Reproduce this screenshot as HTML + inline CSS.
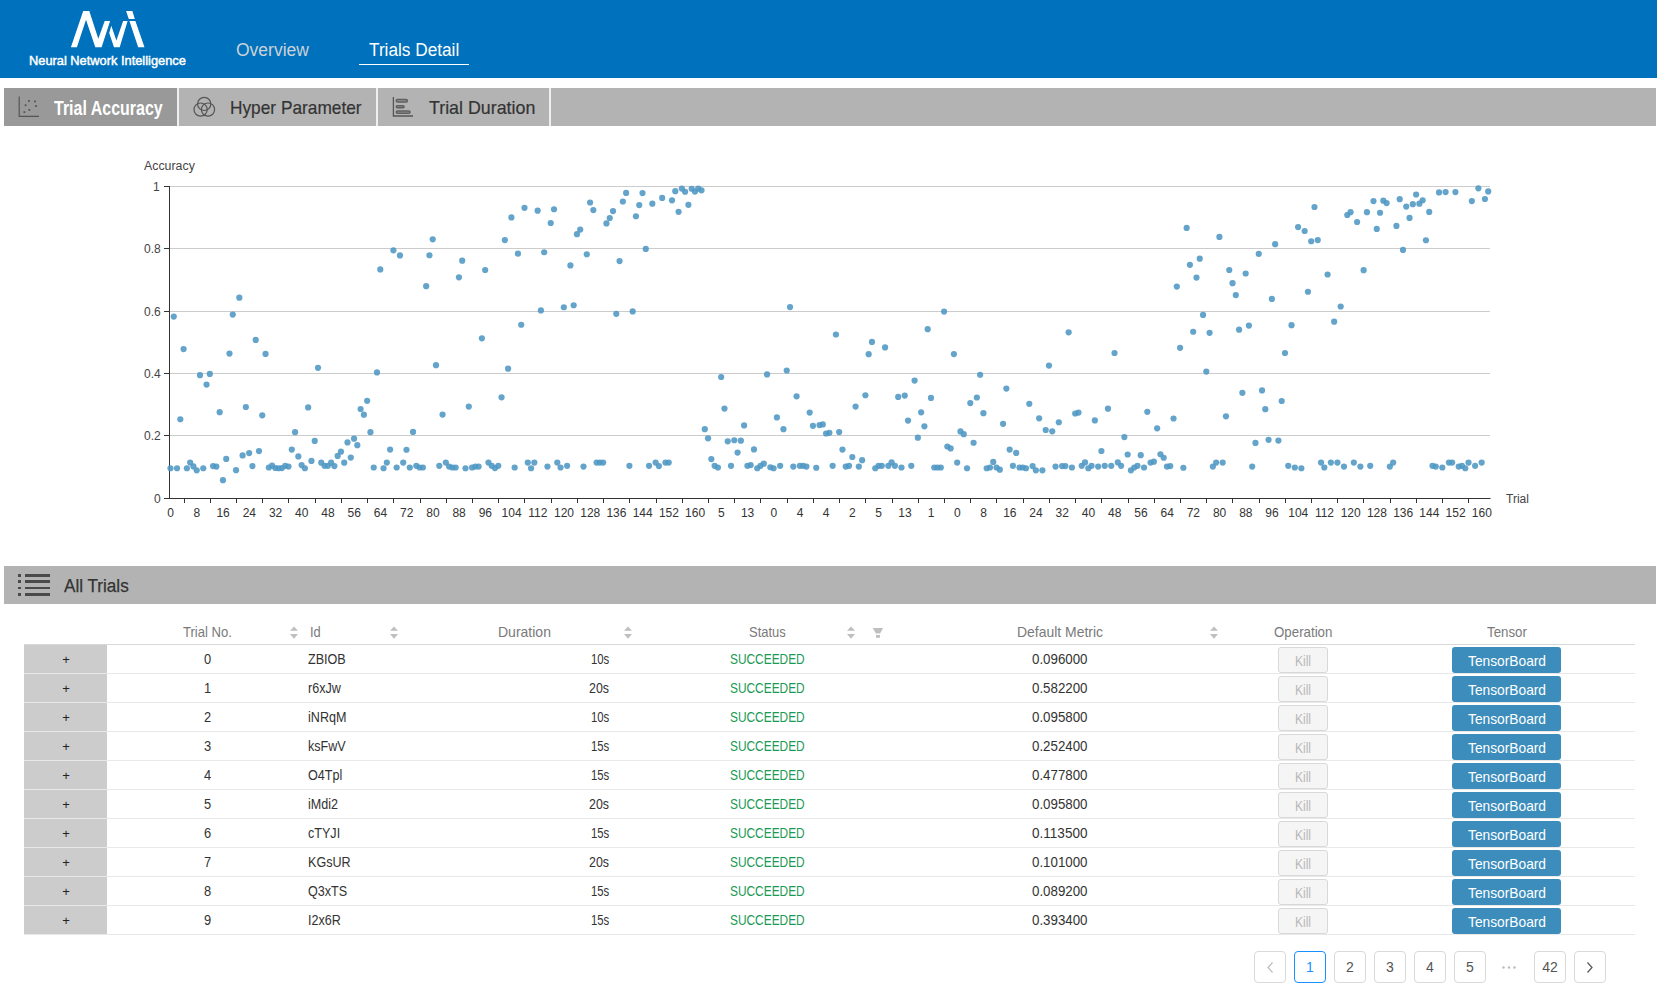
<!DOCTYPE html>
<html><head><meta charset="utf-8"><title>NNI</title>
<style>
html,body{margin:0;padding:0;background:#fff;width:1657px;height:984px;overflow:hidden;}
body{position:relative;font-family:"Liberation Sans",sans-serif;}
.t{position:absolute;white-space:nowrap;font-family:"Liberation Sans",sans-serif;}
.r{position:absolute;box-sizing:content-box;}
</style></head><body>
<div class="r" style="left:0px;top:0px;width:1657px;height:78px;background:#0071bc;"></div>
<svg class="r" style="left:0;top:0" width="200" height="78" viewBox="0 0 200 78">
<path fill="#fff" d="M70.9,47.2 L83.2,11 L89.3,11 L98.3,38.8 L104.7,21 L110.1,21 L101.6,47.2 L95.3,47.2 L86,19.8 L76.9,47.2 Z"/>
<path fill="#fff" d="M111.3,25.8 L109.2,33.1 L114,47.2 L119.7,47.2 L127.6,21 L123.1,21 L116.4,40.6 Z"/>
<path fill="#fff" d="M126.1,11 L132.4,11 L134.8,18.9 L128.8,18.9 Z"/>
<path fill="#fff" d="M129.4,21 L135.4,21 L144.5,47.2 L138.2,47.2 Z"/>
</svg>
<div class="t" style="left:29.00px;top:55.20px;font-size:12.7px;line-height:12.7px;color:#fff;transform:scaleX(1.0109);transform-origin:0 0;-webkit-text-stroke:0.45px #fff;">Neural Network Intelligence</div>
<div class="t" style="left:235.50px;top:41.30px;font-size:18px;line-height:18px;color:#cbd2d8;transform:scaleX(0.9720);transform-origin:0 0;">Overview</div>
<div class="t" style="left:369.00px;top:41.30px;font-size:18px;line-height:18px;color:#fff;transform:scaleX(0.9566);transform-origin:0 0;">Trials Detail</div>
<div class="r" style="left:359px;top:64px;width:110px;height:1px;background:#fff;"></div>
<div class="r" style="left:4px;top:88px;width:1652px;height:38px;background:#b3b3b3;"></div>
<div class="r" style="left:4px;top:88px;width:173px;height:38px;background:#999999;"></div>
<div class="r" style="left:177px;top:88px;width:2px;height:38px;background:#efefef;"></div>
<div class="r" style="left:376px;top:88px;width:2px;height:38px;background:#efefef;"></div>
<div class="r" style="left:549px;top:88px;width:2px;height:38px;background:#efefef;"></div>
<div class="t" style="left:54.30px;top:98.00px;font-size:20px;line-height:20px;color:#fff;font-weight:bold;transform:scaleX(0.7993);transform-origin:0 0;">Trial Accuracy</div>
<div class="t" style="left:230.30px;top:97.95px;font-size:19px;line-height:19px;color:#333;transform:scaleX(0.9095);transform-origin:0 0;-webkit-text-stroke:0.2px #333;">Hyper Parameter</div>
<div class="t" style="left:428.50px;top:97.95px;font-size:19px;line-height:19px;color:#333;transform:scaleX(0.9382);transform-origin:0 0;-webkit-text-stroke:0.2px #333;">Trial Duration</div>
<svg class="r" style="left:0;top:85px" width="560" height="45" viewBox="0 85 560 45">
<g stroke="#555" fill="none" stroke-width="1.2">
<path d="M19.2,96.5 V116.3 H39"/>
</g>
<g fill="#555">
<rect x="28" y="100" width="1.8" height="1.8"/><rect x="34" y="100.5" width="1.8" height="1.8"/>
<rect x="24.7" y="104.3" width="1.8" height="1.8"/><rect x="35" y="105.2" width="1.8" height="1.8"/>
<rect x="28.4" y="109" width="1.8" height="1.8"/><rect x="23.5" y="111.2" width="1.8" height="1.8"/>
</g>
<g stroke="#555" fill="none" stroke-width="1.2">
<circle cx="204.2" cy="103.9" r="6.6"/><circle cx="200.6" cy="109.6" r="6.6"/><circle cx="208" cy="109.6" r="6.6"/>
</g>
<g stroke="#555" fill="none" stroke-width="1.3">
<path d="M393.4,97 V116 H413"/>
</g>
<g stroke="#5f5f5f" fill="#959595" stroke-width="1.5">
<rect x="396.25" y="99.55" width="11.1" height="2.5" rx="1.25"/>
<rect x="396.25" y="105.85" width="7.8" height="1.9" rx="0.95"/>
<rect x="396.25" y="110.95" width="13.8" height="2.2" rx="1.1"/>
</g>
</svg>
<svg class="r" style="left:0;top:0" width="1657" height="560">
<line x1="169" x2="1490" y1="186.5" y2="186.5" stroke="#ccc" stroke-width="1"/>
<line x1="169" x2="1490" y1="248.5" y2="248.5" stroke="#ccc" stroke-width="1"/>
<line x1="169" x2="1490" y1="311.5" y2="311.5" stroke="#ccc" stroke-width="1"/>
<line x1="169" x2="1490" y1="373.5" y2="373.5" stroke="#ccc" stroke-width="1"/>
<line x1="169" x2="1490" y1="435.5" y2="435.5" stroke="#ccc" stroke-width="1"/>
<line x1="169.5" x2="169.5" y1="186" y2="498.5" stroke="#333" stroke-width="1"/>
<line x1="164" x2="169.5" y1="186.5" y2="186.5" stroke="#333" stroke-width="1"/>
<line x1="164" x2="169.5" y1="248.5" y2="248.5" stroke="#333" stroke-width="1"/>
<line x1="164" x2="169.5" y1="311.5" y2="311.5" stroke="#333" stroke-width="1"/>
<line x1="164" x2="169.5" y1="373.5" y2="373.5" stroke="#333" stroke-width="1"/>
<line x1="164" x2="169.5" y1="435.5" y2="435.5" stroke="#333" stroke-width="1"/>
<line x1="164" x2="169.5" y1="498.5" y2="498.5" stroke="#333" stroke-width="1"/>
<line x1="164" x2="1490.5" y1="498.5" y2="498.5" stroke="#333" stroke-width="1"/>
<line x1="184.5" x2="184.5" y1="498.5" y2="503" stroke="#333" stroke-width="1"/>
<line x1="210.5" x2="210.5" y1="498.5" y2="503" stroke="#333" stroke-width="1"/>
<line x1="236.5" x2="236.5" y1="498.5" y2="503" stroke="#333" stroke-width="1"/>
<line x1="262.5" x2="262.5" y1="498.5" y2="503" stroke="#333" stroke-width="1"/>
<line x1="288.5" x2="288.5" y1="498.5" y2="503" stroke="#333" stroke-width="1"/>
<line x1="315.5" x2="315.5" y1="498.5" y2="503" stroke="#333" stroke-width="1"/>
<line x1="341.5" x2="341.5" y1="498.5" y2="503" stroke="#333" stroke-width="1"/>
<line x1="367.5" x2="367.5" y1="498.5" y2="503" stroke="#333" stroke-width="1"/>
<line x1="393.5" x2="393.5" y1="498.5" y2="503" stroke="#333" stroke-width="1"/>
<line x1="420.5" x2="420.5" y1="498.5" y2="503" stroke="#333" stroke-width="1"/>
<line x1="446.5" x2="446.5" y1="498.5" y2="503" stroke="#333" stroke-width="1"/>
<line x1="472.5" x2="472.5" y1="498.5" y2="503" stroke="#333" stroke-width="1"/>
<line x1="498.5" x2="498.5" y1="498.5" y2="503" stroke="#333" stroke-width="1"/>
<line x1="524.5" x2="524.5" y1="498.5" y2="503" stroke="#333" stroke-width="1"/>
<line x1="551.5" x2="551.5" y1="498.5" y2="503" stroke="#333" stroke-width="1"/>
<line x1="577.5" x2="577.5" y1="498.5" y2="503" stroke="#333" stroke-width="1"/>
<line x1="603.5" x2="603.5" y1="498.5" y2="503" stroke="#333" stroke-width="1"/>
<line x1="629.5" x2="629.5" y1="498.5" y2="503" stroke="#333" stroke-width="1"/>
<line x1="656.5" x2="656.5" y1="498.5" y2="503" stroke="#333" stroke-width="1"/>
<line x1="682.5" x2="682.5" y1="498.5" y2="503" stroke="#333" stroke-width="1"/>
<line x1="708.5" x2="708.5" y1="498.5" y2="503" stroke="#333" stroke-width="1"/>
<line x1="734.5" x2="734.5" y1="498.5" y2="503" stroke="#333" stroke-width="1"/>
<line x1="760.5" x2="760.5" y1="498.5" y2="503" stroke="#333" stroke-width="1"/>
<line x1="787.5" x2="787.5" y1="498.5" y2="503" stroke="#333" stroke-width="1"/>
<line x1="813.5" x2="813.5" y1="498.5" y2="503" stroke="#333" stroke-width="1"/>
<line x1="839.5" x2="839.5" y1="498.5" y2="503" stroke="#333" stroke-width="1"/>
<line x1="865.5" x2="865.5" y1="498.5" y2="503" stroke="#333" stroke-width="1"/>
<line x1="892.5" x2="892.5" y1="498.5" y2="503" stroke="#333" stroke-width="1"/>
<line x1="918.5" x2="918.5" y1="498.5" y2="503" stroke="#333" stroke-width="1"/>
<line x1="944.5" x2="944.5" y1="498.5" y2="503" stroke="#333" stroke-width="1"/>
<line x1="970.5" x2="970.5" y1="498.5" y2="503" stroke="#333" stroke-width="1"/>
<line x1="996.5" x2="996.5" y1="498.5" y2="503" stroke="#333" stroke-width="1"/>
<line x1="1023.5" x2="1023.5" y1="498.5" y2="503" stroke="#333" stroke-width="1"/>
<line x1="1049.5" x2="1049.5" y1="498.5" y2="503" stroke="#333" stroke-width="1"/>
<line x1="1075.5" x2="1075.5" y1="498.5" y2="503" stroke="#333" stroke-width="1"/>
<line x1="1101.5" x2="1101.5" y1="498.5" y2="503" stroke="#333" stroke-width="1"/>
<line x1="1128.5" x2="1128.5" y1="498.5" y2="503" stroke="#333" stroke-width="1"/>
<line x1="1154.5" x2="1154.5" y1="498.5" y2="503" stroke="#333" stroke-width="1"/>
<line x1="1180.5" x2="1180.5" y1="498.5" y2="503" stroke="#333" stroke-width="1"/>
<line x1="1206.5" x2="1206.5" y1="498.5" y2="503" stroke="#333" stroke-width="1"/>
<line x1="1232.5" x2="1232.5" y1="498.5" y2="503" stroke="#333" stroke-width="1"/>
<line x1="1259.5" x2="1259.5" y1="498.5" y2="503" stroke="#333" stroke-width="1"/>
<line x1="1285.5" x2="1285.5" y1="498.5" y2="503" stroke="#333" stroke-width="1"/>
<line x1="1311.5" x2="1311.5" y1="498.5" y2="503" stroke="#333" stroke-width="1"/>
<line x1="1337.5" x2="1337.5" y1="498.5" y2="503" stroke="#333" stroke-width="1"/>
<line x1="1363.5" x2="1363.5" y1="498.5" y2="503" stroke="#333" stroke-width="1"/>
<line x1="1390.5" x2="1390.5" y1="498.5" y2="503" stroke="#333" stroke-width="1"/>
<line x1="1416.5" x2="1416.5" y1="498.5" y2="503" stroke="#333" stroke-width="1"/>
<line x1="1442.5" x2="1442.5" y1="498.5" y2="503" stroke="#333" stroke-width="1"/>
<line x1="1468.5" x2="1468.5" y1="498.5" y2="503" stroke="#333" stroke-width="1"/>
<circle fill="#4e97c4" fill-opacity="0.88" cx="170.49" cy="468.24" r="3.1"/>
<circle fill="#4e97c4" fill-opacity="0.88" cx="173.77" cy="316.60" r="3.1"/>
<circle fill="#4e97c4" fill-opacity="0.88" cx="177.04" cy="468.24" r="3.1"/>
<circle fill="#4e97c4" fill-opacity="0.88" cx="180.32" cy="419.24" r="3.1"/>
<circle fill="#4e97c4" fill-opacity="0.88" cx="183.60" cy="349.08" r="3.1"/>
<circle fill="#4e97c4" fill-opacity="0.88" cx="186.88" cy="468.24" r="3.1"/>
<circle fill="#4e97c4" fill-opacity="0.88" cx="190.16" cy="462.57" r="3.1"/>
<circle fill="#4e97c4" fill-opacity="0.88" cx="193.43" cy="466.43" r="3.1"/>
<circle fill="#4e97c4" fill-opacity="0.88" cx="196.71" cy="470.29" r="3.1"/>
<circle fill="#4e97c4" fill-opacity="0.88" cx="199.99" cy="375.18" r="3.1"/>
<circle fill="#4e97c4" fill-opacity="0.88" cx="203.27" cy="468.24" r="3.1"/>
<circle fill="#4e97c4" fill-opacity="0.88" cx="206.55" cy="384.54" r="3.1"/>
<circle fill="#4e97c4" fill-opacity="0.88" cx="209.82" cy="373.97" r="3.1"/>
<circle fill="#4e97c4" fill-opacity="0.88" cx="213.10" cy="466.07" r="3.1"/>
<circle fill="#4e97c4" fill-opacity="0.88" cx="216.38" cy="466.55" r="3.1"/>
<circle fill="#4e97c4" fill-opacity="0.88" cx="219.66" cy="412.15" r="3.1"/>
<circle fill="#4e97c4" fill-opacity="0.88" cx="222.94" cy="480.19" r="3.1"/>
<circle fill="#4e97c4" fill-opacity="0.88" cx="226.21" cy="458.94" r="3.1"/>
<circle fill="#4e97c4" fill-opacity="0.88" cx="229.49" cy="353.61" r="3.1"/>
<circle fill="#4e97c4" fill-opacity="0.88" cx="232.77" cy="314.61" r="3.1"/>
<circle fill="#4e97c4" fill-opacity="0.88" cx="236.05" cy="470.17" r="3.1"/>
<circle fill="#4e97c4" fill-opacity="0.88" cx="239.33" cy="297.68" r="3.1"/>
<circle fill="#4e97c4" fill-opacity="0.88" cx="242.60" cy="455.44" r="3.1"/>
<circle fill="#4e97c4" fill-opacity="0.88" cx="245.88" cy="407.02" r="3.1"/>
<circle fill="#4e97c4" fill-opacity="0.88" cx="249.16" cy="453.03" r="3.1"/>
<circle fill="#4e97c4" fill-opacity="0.88" cx="252.44" cy="466.07" r="3.1"/>
<circle fill="#4e97c4" fill-opacity="0.88" cx="255.71" cy="339.90" r="3.1"/>
<circle fill="#4e97c4" fill-opacity="0.88" cx="258.99" cy="451.10" r="3.1"/>
<circle fill="#4e97c4" fill-opacity="0.88" cx="262.27" cy="415.31" r="3.1"/>
<circle fill="#4e97c4" fill-opacity="0.88" cx="265.55" cy="353.91" r="3.1"/>
<circle fill="#4e97c4" fill-opacity="0.88" cx="268.83" cy="467.51" r="3.1"/>
<circle fill="#4e97c4" fill-opacity="0.88" cx="272.10" cy="465.70" r="3.1"/>
<circle fill="#4e97c4" fill-opacity="0.88" cx="275.38" cy="468.00" r="3.1"/>
<circle fill="#4e97c4" fill-opacity="0.88" cx="278.66" cy="468.24" r="3.1"/>
<circle fill="#4e97c4" fill-opacity="0.88" cx="281.94" cy="468.12" r="3.1"/>
<circle fill="#4e97c4" fill-opacity="0.88" cx="285.22" cy="465.82" r="3.1"/>
<circle fill="#4e97c4" fill-opacity="0.88" cx="288.49" cy="466.55" r="3.1"/>
<circle fill="#4e97c4" fill-opacity="0.88" cx="291.77" cy="449.53" r="3.1"/>
<circle fill="#4e97c4" fill-opacity="0.88" cx="295.05" cy="432.15" r="3.1"/>
<circle fill="#4e97c4" fill-opacity="0.88" cx="298.33" cy="456.41" r="3.1"/>
<circle fill="#4e97c4" fill-opacity="0.88" cx="301.61" cy="465.10" r="3.1"/>
<circle fill="#4e97c4" fill-opacity="0.88" cx="304.88" cy="468.24" r="3.1"/>
<circle fill="#4e97c4" fill-opacity="0.88" cx="308.16" cy="407.47" r="3.1"/>
<circle fill="#4e97c4" fill-opacity="0.88" cx="311.44" cy="460.88" r="3.1"/>
<circle fill="#4e97c4" fill-opacity="0.88" cx="314.72" cy="440.96" r="3.1"/>
<circle fill="#4e97c4" fill-opacity="0.88" cx="318.00" cy="367.79" r="3.1"/>
<circle fill="#4e97c4" fill-opacity="0.88" cx="321.27" cy="462.69" r="3.1"/>
<circle fill="#4e97c4" fill-opacity="0.88" cx="324.55" cy="465.82" r="3.1"/>
<circle fill="#4e97c4" fill-opacity="0.88" cx="327.83" cy="465.82" r="3.1"/>
<circle fill="#4e97c4" fill-opacity="0.88" cx="331.11" cy="462.69" r="3.1"/>
<circle fill="#4e97c4" fill-opacity="0.88" cx="334.38" cy="466.07" r="3.1"/>
<circle fill="#4e97c4" fill-opacity="0.88" cx="337.66" cy="455.93" r="3.1"/>
<circle fill="#4e97c4" fill-opacity="0.88" cx="340.94" cy="451.70" r="3.1"/>
<circle fill="#4e97c4" fill-opacity="0.88" cx="344.22" cy="462.69" r="3.1"/>
<circle fill="#4e97c4" fill-opacity="0.88" cx="347.50" cy="442.41" r="3.1"/>
<circle fill="#4e97c4" fill-opacity="0.88" cx="350.77" cy="457.62" r="3.1"/>
<circle fill="#4e97c4" fill-opacity="0.88" cx="354.05" cy="438.67" r="3.1"/>
<circle fill="#4e97c4" fill-opacity="0.88" cx="357.33" cy="445.18" r="3.1"/>
<circle fill="#4e97c4" fill-opacity="0.88" cx="360.61" cy="408.98" r="3.1"/>
<circle fill="#4e97c4" fill-opacity="0.88" cx="363.89" cy="414.71" r="3.1"/>
<circle fill="#4e97c4" fill-opacity="0.88" cx="367.16" cy="400.83" r="3.1"/>
<circle fill="#4e97c4" fill-opacity="0.88" cx="370.44" cy="432.15" r="3.1"/>
<circle fill="#4e97c4" fill-opacity="0.88" cx="373.72" cy="467.51" r="3.1"/>
<circle fill="#4e97c4" fill-opacity="0.88" cx="377.00" cy="372.47" r="3.1"/>
<circle fill="#4e97c4" fill-opacity="0.88" cx="380.28" cy="269.40" r="3.1"/>
<circle fill="#4e97c4" fill-opacity="0.88" cx="383.55" cy="468.24" r="3.1"/>
<circle fill="#4e97c4" fill-opacity="0.88" cx="386.83" cy="462.57" r="3.1"/>
<circle fill="#4e97c4" fill-opacity="0.88" cx="390.11" cy="449.53" r="3.1"/>
<circle fill="#4e97c4" fill-opacity="0.88" cx="393.39" cy="250.28" r="3.1"/>
<circle fill="#4e97c4" fill-opacity="0.88" cx="396.67" cy="467.51" r="3.1"/>
<circle fill="#4e97c4" fill-opacity="0.88" cx="399.94" cy="255.46" r="3.1"/>
<circle fill="#4e97c4" fill-opacity="0.88" cx="403.22" cy="462.57" r="3.1"/>
<circle fill="#4e97c4" fill-opacity="0.88" cx="406.50" cy="449.77" r="3.1"/>
<circle fill="#4e97c4" fill-opacity="0.88" cx="409.78" cy="467.51" r="3.1"/>
<circle fill="#4e97c4" fill-opacity="0.88" cx="413.05" cy="431.91" r="3.1"/>
<circle fill="#4e97c4" fill-opacity="0.88" cx="416.33" cy="465.82" r="3.1"/>
<circle fill="#4e97c4" fill-opacity="0.88" cx="419.61" cy="467.51" r="3.1"/>
<circle fill="#4e97c4" fill-opacity="0.88" cx="422.89" cy="467.51" r="3.1"/>
<circle fill="#4e97c4" fill-opacity="0.88" cx="426.17" cy="286.13" r="3.1"/>
<circle fill="#4e97c4" fill-opacity="0.88" cx="429.44" cy="255.26" r="3.1"/>
<circle fill="#4e97c4" fill-opacity="0.88" cx="432.72" cy="239.33" r="3.1"/>
<circle fill="#4e97c4" fill-opacity="0.88" cx="436.00" cy="365.22" r="3.1"/>
<circle fill="#4e97c4" fill-opacity="0.88" cx="439.28" cy="465.82" r="3.1"/>
<circle fill="#4e97c4" fill-opacity="0.88" cx="442.56" cy="414.56" r="3.1"/>
<circle fill="#4e97c4" fill-opacity="0.88" cx="445.83" cy="462.57" r="3.1"/>
<circle fill="#4e97c4" fill-opacity="0.88" cx="449.11" cy="466.55" r="3.1"/>
<circle fill="#4e97c4" fill-opacity="0.88" cx="452.39" cy="467.51" r="3.1"/>
<circle fill="#4e97c4" fill-opacity="0.88" cx="455.67" cy="467.51" r="3.1"/>
<circle fill="#4e97c4" fill-opacity="0.88" cx="458.95" cy="277.37" r="3.1"/>
<circle fill="#4e97c4" fill-opacity="0.88" cx="462.22" cy="260.64" r="3.1"/>
<circle fill="#4e97c4" fill-opacity="0.88" cx="465.50" cy="468.24" r="3.1"/>
<circle fill="#4e97c4" fill-opacity="0.88" cx="468.78" cy="406.56" r="3.1"/>
<circle fill="#4e97c4" fill-opacity="0.88" cx="472.06" cy="467.51" r="3.1"/>
<circle fill="#4e97c4" fill-opacity="0.88" cx="475.34" cy="466.55" r="3.1"/>
<circle fill="#4e97c4" fill-opacity="0.88" cx="478.61" cy="466.55" r="3.1"/>
<circle fill="#4e97c4" fill-opacity="0.88" cx="481.89" cy="338.31" r="3.1"/>
<circle fill="#4e97c4" fill-opacity="0.88" cx="485.17" cy="270.00" r="3.1"/>
<circle fill="#4e97c4" fill-opacity="0.88" cx="488.45" cy="462.57" r="3.1"/>
<circle fill="#4e97c4" fill-opacity="0.88" cx="491.72" cy="465.82" r="3.1"/>
<circle fill="#4e97c4" fill-opacity="0.88" cx="495.00" cy="468.12" r="3.1"/>
<circle fill="#4e97c4" fill-opacity="0.88" cx="498.28" cy="465.82" r="3.1"/>
<circle fill="#4e97c4" fill-opacity="0.88" cx="501.56" cy="397.36" r="3.1"/>
<circle fill="#4e97c4" fill-opacity="0.88" cx="504.84" cy="240.12" r="3.1"/>
<circle fill="#4e97c4" fill-opacity="0.88" cx="508.11" cy="368.69" r="3.1"/>
<circle fill="#4e97c4" fill-opacity="0.88" cx="511.39" cy="217.42" r="3.1"/>
<circle fill="#4e97c4" fill-opacity="0.88" cx="514.67" cy="467.51" r="3.1"/>
<circle fill="#4e97c4" fill-opacity="0.88" cx="517.95" cy="253.67" r="3.1"/>
<circle fill="#4e97c4" fill-opacity="0.88" cx="521.23" cy="324.77" r="3.1"/>
<circle fill="#4e97c4" fill-opacity="0.88" cx="524.50" cy="207.86" r="3.1"/>
<circle fill="#4e97c4" fill-opacity="0.88" cx="527.78" cy="462.57" r="3.1"/>
<circle fill="#4e97c4" fill-opacity="0.88" cx="531.06" cy="468.24" r="3.1"/>
<circle fill="#4e97c4" fill-opacity="0.88" cx="534.34" cy="462.57" r="3.1"/>
<circle fill="#4e97c4" fill-opacity="0.88" cx="537.62" cy="210.65" r="3.1"/>
<circle fill="#4e97c4" fill-opacity="0.88" cx="540.89" cy="310.43" r="3.1"/>
<circle fill="#4e97c4" fill-opacity="0.88" cx="544.17" cy="252.27" r="3.1"/>
<circle fill="#4e97c4" fill-opacity="0.88" cx="547.45" cy="466.55" r="3.1"/>
<circle fill="#4e97c4" fill-opacity="0.88" cx="550.73" cy="223.00" r="3.1"/>
<circle fill="#4e97c4" fill-opacity="0.88" cx="554.01" cy="209.26" r="3.1"/>
<circle fill="#4e97c4" fill-opacity="0.88" cx="557.28" cy="462.57" r="3.1"/>
<circle fill="#4e97c4" fill-opacity="0.88" cx="560.56" cy="467.51" r="3.1"/>
<circle fill="#4e97c4" fill-opacity="0.88" cx="563.84" cy="307.24" r="3.1"/>
<circle fill="#4e97c4" fill-opacity="0.88" cx="567.12" cy="465.82" r="3.1"/>
<circle fill="#4e97c4" fill-opacity="0.88" cx="570.39" cy="265.42" r="3.1"/>
<circle fill="#4e97c4" fill-opacity="0.88" cx="573.67" cy="305.25" r="3.1"/>
<circle fill="#4e97c4" fill-opacity="0.88" cx="576.95" cy="234.15" r="3.1"/>
<circle fill="#4e97c4" fill-opacity="0.88" cx="580.23" cy="229.57" r="3.1"/>
<circle fill="#4e97c4" fill-opacity="0.88" cx="583.51" cy="466.55" r="3.1"/>
<circle fill="#4e97c4" fill-opacity="0.88" cx="586.78" cy="254.26" r="3.1"/>
<circle fill="#4e97c4" fill-opacity="0.88" cx="590.06" cy="202.48" r="3.1"/>
<circle fill="#4e97c4" fill-opacity="0.88" cx="593.34" cy="210.05" r="3.1"/>
<circle fill="#4e97c4" fill-opacity="0.88" cx="596.62" cy="462.57" r="3.1"/>
<circle fill="#4e97c4" fill-opacity="0.88" cx="599.90" cy="462.57" r="3.1"/>
<circle fill="#4e97c4" fill-opacity="0.88" cx="603.17" cy="462.57" r="3.1"/>
<circle fill="#4e97c4" fill-opacity="0.88" cx="606.45" cy="223.40" r="3.1"/>
<circle fill="#4e97c4" fill-opacity="0.88" cx="609.73" cy="218.02" r="3.1"/>
<circle fill="#4e97c4" fill-opacity="0.88" cx="613.01" cy="211.05" r="3.1"/>
<circle fill="#4e97c4" fill-opacity="0.88" cx="616.29" cy="313.81" r="3.1"/>
<circle fill="#4e97c4" fill-opacity="0.88" cx="619.56" cy="261.04" r="3.1"/>
<circle fill="#4e97c4" fill-opacity="0.88" cx="622.84" cy="201.49" r="3.1"/>
<circle fill="#4e97c4" fill-opacity="0.88" cx="626.12" cy="192.92" r="3.1"/>
<circle fill="#4e97c4" fill-opacity="0.88" cx="629.40" cy="465.82" r="3.1"/>
<circle fill="#4e97c4" fill-opacity="0.88" cx="632.68" cy="311.42" r="3.1"/>
<circle fill="#4e97c4" fill-opacity="0.88" cx="635.95" cy="216.23" r="3.1"/>
<circle fill="#4e97c4" fill-opacity="0.88" cx="639.23" cy="205.07" r="3.1"/>
<circle fill="#4e97c4" fill-opacity="0.88" cx="642.51" cy="193.12" r="3.1"/>
<circle fill="#4e97c4" fill-opacity="0.88" cx="645.79" cy="248.89" r="3.1"/>
<circle fill="#4e97c4" fill-opacity="0.88" cx="649.06" cy="465.82" r="3.1"/>
<circle fill="#4e97c4" fill-opacity="0.88" cx="652.34" cy="203.68" r="3.1"/>
<circle fill="#4e97c4" fill-opacity="0.88" cx="655.62" cy="462.57" r="3.1"/>
<circle fill="#4e97c4" fill-opacity="0.88" cx="658.90" cy="466.07" r="3.1"/>
<circle fill="#4e97c4" fill-opacity="0.88" cx="662.18" cy="197.90" r="3.1"/>
<circle fill="#4e97c4" fill-opacity="0.88" cx="665.45" cy="462.57" r="3.1"/>
<circle fill="#4e97c4" fill-opacity="0.88" cx="668.73" cy="462.57" r="3.1"/>
<circle fill="#4e97c4" fill-opacity="0.88" cx="672.01" cy="200.29" r="3.1"/>
<circle fill="#4e97c4" fill-opacity="0.88" cx="675.29" cy="191.13" r="3.1"/>
<circle fill="#4e97c4" fill-opacity="0.88" cx="678.57" cy="211.84" r="3.1"/>
<circle fill="#4e97c4" fill-opacity="0.88" cx="681.84" cy="188.54" r="3.1"/>
<circle fill="#4e97c4" fill-opacity="0.88" cx="685.12" cy="191.73" r="3.1"/>
<circle fill="#4e97c4" fill-opacity="0.88" cx="688.40" cy="204.87" r="3.1"/>
<circle fill="#4e97c4" fill-opacity="0.88" cx="691.68" cy="188.74" r="3.1"/>
<circle fill="#4e97c4" fill-opacity="0.88" cx="694.96" cy="191.53" r="3.1"/>
<circle fill="#4e97c4" fill-opacity="0.88" cx="698.23" cy="188.54" r="3.1"/>
<circle fill="#4e97c4" fill-opacity="0.88" cx="701.51" cy="190.34" r="3.1"/>
<circle fill="#4e97c4" fill-opacity="0.88" cx="704.79" cy="429.13" r="3.1"/>
<circle fill="#4e97c4" fill-opacity="0.88" cx="708.07" cy="438.31" r="3.1"/>
<circle fill="#4e97c4" fill-opacity="0.88" cx="711.35" cy="459.07" r="3.1"/>
<circle fill="#4e97c4" fill-opacity="0.88" cx="714.62" cy="465.82" r="3.1"/>
<circle fill="#4e97c4" fill-opacity="0.88" cx="717.90" cy="467.51" r="3.1"/>
<circle fill="#4e97c4" fill-opacity="0.88" cx="721.18" cy="376.99" r="3.1"/>
<circle fill="#4e97c4" fill-opacity="0.88" cx="724.46" cy="408.53" r="3.1"/>
<circle fill="#4e97c4" fill-opacity="0.88" cx="727.73" cy="441.32" r="3.1"/>
<circle fill="#4e97c4" fill-opacity="0.88" cx="731.01" cy="465.82" r="3.1"/>
<circle fill="#4e97c4" fill-opacity="0.88" cx="734.29" cy="440.24" r="3.1"/>
<circle fill="#4e97c4" fill-opacity="0.88" cx="737.57" cy="452.55" r="3.1"/>
<circle fill="#4e97c4" fill-opacity="0.88" cx="740.85" cy="440.72" r="3.1"/>
<circle fill="#4e97c4" fill-opacity="0.88" cx="744.12" cy="425.39" r="3.1"/>
<circle fill="#4e97c4" fill-opacity="0.88" cx="747.40" cy="465.82" r="3.1"/>
<circle fill="#4e97c4" fill-opacity="0.88" cx="750.68" cy="465.10" r="3.1"/>
<circle fill="#4e97c4" fill-opacity="0.88" cx="753.96" cy="449.41" r="3.1"/>
<circle fill="#4e97c4" fill-opacity="0.88" cx="757.24" cy="468.24" r="3.1"/>
<circle fill="#4e97c4" fill-opacity="0.88" cx="760.51" cy="465.82" r="3.1"/>
<circle fill="#4e97c4" fill-opacity="0.88" cx="763.79" cy="463.65" r="3.1"/>
<circle fill="#4e97c4" fill-opacity="0.88" cx="767.07" cy="374.43" r="3.1"/>
<circle fill="#4e97c4" fill-opacity="0.88" cx="770.35" cy="467.27" r="3.1"/>
<circle fill="#4e97c4" fill-opacity="0.88" cx="773.63" cy="468.24" r="3.1"/>
<circle fill="#4e97c4" fill-opacity="0.88" cx="776.90" cy="417.43" r="3.1"/>
<circle fill="#4e97c4" fill-opacity="0.88" cx="780.18" cy="465.82" r="3.1"/>
<circle fill="#4e97c4" fill-opacity="0.88" cx="783.46" cy="429.13" r="3.1"/>
<circle fill="#4e97c4" fill-opacity="0.88" cx="786.74" cy="370.50" r="3.1"/>
<circle fill="#4e97c4" fill-opacity="0.88" cx="790.02" cy="307.04" r="3.1"/>
<circle fill="#4e97c4" fill-opacity="0.88" cx="793.29" cy="466.55" r="3.1"/>
<circle fill="#4e97c4" fill-opacity="0.88" cx="796.57" cy="396.30" r="3.1"/>
<circle fill="#4e97c4" fill-opacity="0.88" cx="799.85" cy="465.82" r="3.1"/>
<circle fill="#4e97c4" fill-opacity="0.88" cx="803.13" cy="465.82" r="3.1"/>
<circle fill="#4e97c4" fill-opacity="0.88" cx="806.40" cy="466.55" r="3.1"/>
<circle fill="#4e97c4" fill-opacity="0.88" cx="809.68" cy="412.60" r="3.1"/>
<circle fill="#4e97c4" fill-opacity="0.88" cx="812.96" cy="425.87" r="3.1"/>
<circle fill="#4e97c4" fill-opacity="0.88" cx="816.24" cy="467.76" r="3.1"/>
<circle fill="#4e97c4" fill-opacity="0.88" cx="819.52" cy="425.03" r="3.1"/>
<circle fill="#4e97c4" fill-opacity="0.88" cx="822.79" cy="424.42" r="3.1"/>
<circle fill="#4e97c4" fill-opacity="0.88" cx="826.07" cy="433.48" r="3.1"/>
<circle fill="#4e97c4" fill-opacity="0.88" cx="829.35" cy="432.87" r="3.1"/>
<circle fill="#4e97c4" fill-opacity="0.88" cx="832.63" cy="465.82" r="3.1"/>
<circle fill="#4e97c4" fill-opacity="0.88" cx="835.91" cy="334.52" r="3.1"/>
<circle fill="#4e97c4" fill-opacity="0.88" cx="839.18" cy="432.03" r="3.1"/>
<circle fill="#4e97c4" fill-opacity="0.88" cx="842.46" cy="449.53" r="3.1"/>
<circle fill="#4e97c4" fill-opacity="0.88" cx="845.74" cy="466.55" r="3.1"/>
<circle fill="#4e97c4" fill-opacity="0.88" cx="849.02" cy="465.82" r="3.1"/>
<circle fill="#4e97c4" fill-opacity="0.88" cx="852.30" cy="457.01" r="3.1"/>
<circle fill="#4e97c4" fill-opacity="0.88" cx="855.57" cy="406.56" r="3.1"/>
<circle fill="#4e97c4" fill-opacity="0.88" cx="858.85" cy="466.55" r="3.1"/>
<circle fill="#4e97c4" fill-opacity="0.88" cx="862.13" cy="460.15" r="3.1"/>
<circle fill="#4e97c4" fill-opacity="0.88" cx="865.41" cy="395.25" r="3.1"/>
<circle fill="#4e97c4" fill-opacity="0.88" cx="868.68" cy="354.21" r="3.1"/>
<circle fill="#4e97c4" fill-opacity="0.88" cx="871.96" cy="341.89" r="3.1"/>
<circle fill="#4e97c4" fill-opacity="0.88" cx="875.24" cy="468.24" r="3.1"/>
<circle fill="#4e97c4" fill-opacity="0.88" cx="878.52" cy="465.82" r="3.1"/>
<circle fill="#4e97c4" fill-opacity="0.88" cx="881.80" cy="465.82" r="3.1"/>
<circle fill="#4e97c4" fill-opacity="0.88" cx="885.07" cy="347.42" r="3.1"/>
<circle fill="#4e97c4" fill-opacity="0.88" cx="888.35" cy="465.82" r="3.1"/>
<circle fill="#4e97c4" fill-opacity="0.88" cx="891.63" cy="462.45" r="3.1"/>
<circle fill="#4e97c4" fill-opacity="0.88" cx="894.91" cy="465.82" r="3.1"/>
<circle fill="#4e97c4" fill-opacity="0.88" cx="898.19" cy="396.91" r="3.1"/>
<circle fill="#4e97c4" fill-opacity="0.88" cx="901.46" cy="467.51" r="3.1"/>
<circle fill="#4e97c4" fill-opacity="0.88" cx="904.74" cy="395.55" r="3.1"/>
<circle fill="#4e97c4" fill-opacity="0.88" cx="908.02" cy="420.60" r="3.1"/>
<circle fill="#4e97c4" fill-opacity="0.88" cx="911.30" cy="465.82" r="3.1"/>
<circle fill="#4e97c4" fill-opacity="0.88" cx="914.58" cy="380.61" r="3.1"/>
<circle fill="#4e97c4" fill-opacity="0.88" cx="917.85" cy="437.70" r="3.1"/>
<circle fill="#4e97c4" fill-opacity="0.88" cx="921.13" cy="412.30" r="3.1"/>
<circle fill="#4e97c4" fill-opacity="0.88" cx="924.41" cy="426.36" r="3.1"/>
<circle fill="#4e97c4" fill-opacity="0.88" cx="927.69" cy="329.15" r="3.1"/>
<circle fill="#4e97c4" fill-opacity="0.88" cx="930.97" cy="397.96" r="3.1"/>
<circle fill="#4e97c4" fill-opacity="0.88" cx="934.24" cy="467.51" r="3.1"/>
<circle fill="#4e97c4" fill-opacity="0.88" cx="937.52" cy="467.51" r="3.1"/>
<circle fill="#4e97c4" fill-opacity="0.88" cx="940.80" cy="467.51" r="3.1"/>
<circle fill="#4e97c4" fill-opacity="0.88" cx="944.08" cy="311.62" r="3.1"/>
<circle fill="#4e97c4" fill-opacity="0.88" cx="947.35" cy="446.51" r="3.1"/>
<circle fill="#4e97c4" fill-opacity="0.88" cx="950.63" cy="448.44" r="3.1"/>
<circle fill="#4e97c4" fill-opacity="0.88" cx="953.91" cy="354.06" r="3.1"/>
<circle fill="#4e97c4" fill-opacity="0.88" cx="957.19" cy="462.57" r="3.1"/>
<circle fill="#4e97c4" fill-opacity="0.88" cx="960.47" cy="431.43" r="3.1"/>
<circle fill="#4e97c4" fill-opacity="0.88" cx="963.74" cy="434.20" r="3.1"/>
<circle fill="#4e97c4" fill-opacity="0.88" cx="967.02" cy="468.24" r="3.1"/>
<circle fill="#4e97c4" fill-opacity="0.88" cx="970.30" cy="403.09" r="3.1"/>
<circle fill="#4e97c4" fill-opacity="0.88" cx="973.58" cy="442.77" r="3.1"/>
<circle fill="#4e97c4" fill-opacity="0.88" cx="976.86" cy="397.51" r="3.1"/>
<circle fill="#4e97c4" fill-opacity="0.88" cx="980.13" cy="374.73" r="3.1"/>
<circle fill="#4e97c4" fill-opacity="0.88" cx="983.41" cy="413.20" r="3.1"/>
<circle fill="#4e97c4" fill-opacity="0.88" cx="986.69" cy="468.24" r="3.1"/>
<circle fill="#4e97c4" fill-opacity="0.88" cx="989.97" cy="467.51" r="3.1"/>
<circle fill="#4e97c4" fill-opacity="0.88" cx="993.25" cy="461.96" r="3.1"/>
<circle fill="#4e97c4" fill-opacity="0.88" cx="996.52" cy="467.51" r="3.1"/>
<circle fill="#4e97c4" fill-opacity="0.88" cx="999.80" cy="469.69" r="3.1"/>
<circle fill="#4e97c4" fill-opacity="0.88" cx="1003.08" cy="423.82" r="3.1"/>
<circle fill="#4e97c4" fill-opacity="0.88" cx="1006.36" cy="388.61" r="3.1"/>
<circle fill="#4e97c4" fill-opacity="0.88" cx="1009.64" cy="449.53" r="3.1"/>
<circle fill="#4e97c4" fill-opacity="0.88" cx="1012.91" cy="465.82" r="3.1"/>
<circle fill="#4e97c4" fill-opacity="0.88" cx="1016.19" cy="452.91" r="3.1"/>
<circle fill="#4e97c4" fill-opacity="0.88" cx="1019.47" cy="467.51" r="3.1"/>
<circle fill="#4e97c4" fill-opacity="0.88" cx="1022.75" cy="467.51" r="3.1"/>
<circle fill="#4e97c4" fill-opacity="0.88" cx="1026.02" cy="468.24" r="3.1"/>
<circle fill="#4e97c4" fill-opacity="0.88" cx="1029.30" cy="403.85" r="3.1"/>
<circle fill="#4e97c4" fill-opacity="0.88" cx="1032.58" cy="466.07" r="3.1"/>
<circle fill="#4e97c4" fill-opacity="0.88" cx="1035.86" cy="470.29" r="3.1"/>
<circle fill="#4e97c4" fill-opacity="0.88" cx="1039.14" cy="418.33" r="3.1"/>
<circle fill="#4e97c4" fill-opacity="0.88" cx="1042.41" cy="470.29" r="3.1"/>
<circle fill="#4e97c4" fill-opacity="0.88" cx="1045.69" cy="429.98" r="3.1"/>
<circle fill="#4e97c4" fill-opacity="0.88" cx="1048.97" cy="365.53" r="3.1"/>
<circle fill="#4e97c4" fill-opacity="0.88" cx="1052.25" cy="431.30" r="3.1"/>
<circle fill="#4e97c4" fill-opacity="0.88" cx="1055.53" cy="466.55" r="3.1"/>
<circle fill="#4e97c4" fill-opacity="0.88" cx="1058.80" cy="422.25" r="3.1"/>
<circle fill="#4e97c4" fill-opacity="0.88" cx="1062.08" cy="466.07" r="3.1"/>
<circle fill="#4e97c4" fill-opacity="0.88" cx="1065.36" cy="466.07" r="3.1"/>
<circle fill="#4e97c4" fill-opacity="0.88" cx="1068.64" cy="332.33" r="3.1"/>
<circle fill="#4e97c4" fill-opacity="0.88" cx="1071.92" cy="467.51" r="3.1"/>
<circle fill="#4e97c4" fill-opacity="0.88" cx="1075.19" cy="413.50" r="3.1"/>
<circle fill="#4e97c4" fill-opacity="0.88" cx="1078.47" cy="412.60" r="3.1"/>
<circle fill="#4e97c4" fill-opacity="0.88" cx="1081.75" cy="465.82" r="3.1"/>
<circle fill="#4e97c4" fill-opacity="0.88" cx="1085.03" cy="462.45" r="3.1"/>
<circle fill="#4e97c4" fill-opacity="0.88" cx="1088.31" cy="468.24" r="3.1"/>
<circle fill="#4e97c4" fill-opacity="0.88" cx="1091.58" cy="465.82" r="3.1"/>
<circle fill="#4e97c4" fill-opacity="0.88" cx="1094.86" cy="420.44" r="3.1"/>
<circle fill="#4e97c4" fill-opacity="0.88" cx="1098.14" cy="466.55" r="3.1"/>
<circle fill="#4e97c4" fill-opacity="0.88" cx="1101.42" cy="451.00" r="3.1"/>
<circle fill="#4e97c4" fill-opacity="0.88" cx="1104.69" cy="465.82" r="3.1"/>
<circle fill="#4e97c4" fill-opacity="0.88" cx="1107.97" cy="408.68" r="3.1"/>
<circle fill="#4e97c4" fill-opacity="0.88" cx="1111.25" cy="465.82" r="3.1"/>
<circle fill="#4e97c4" fill-opacity="0.88" cx="1114.53" cy="353.00" r="3.1"/>
<circle fill="#4e97c4" fill-opacity="0.88" cx="1117.81" cy="462.45" r="3.1"/>
<circle fill="#4e97c4" fill-opacity="0.88" cx="1121.08" cy="465.82" r="3.1"/>
<circle fill="#4e97c4" fill-opacity="0.88" cx="1124.36" cy="437.10" r="3.1"/>
<circle fill="#4e97c4" fill-opacity="0.88" cx="1127.64" cy="454.48" r="3.1"/>
<circle fill="#4e97c4" fill-opacity="0.88" cx="1130.92" cy="470.29" r="3.1"/>
<circle fill="#4e97c4" fill-opacity="0.88" cx="1134.20" cy="467.51" r="3.1"/>
<circle fill="#4e97c4" fill-opacity="0.88" cx="1137.47" cy="465.82" r="3.1"/>
<circle fill="#4e97c4" fill-opacity="0.88" cx="1140.75" cy="455.20" r="3.1"/>
<circle fill="#4e97c4" fill-opacity="0.88" cx="1144.03" cy="467.51" r="3.1"/>
<circle fill="#4e97c4" fill-opacity="0.88" cx="1147.31" cy="411.84" r="3.1"/>
<circle fill="#4e97c4" fill-opacity="0.88" cx="1150.59" cy="462.57" r="3.1"/>
<circle fill="#4e97c4" fill-opacity="0.88" cx="1153.86" cy="461.72" r="3.1"/>
<circle fill="#4e97c4" fill-opacity="0.88" cx="1157.14" cy="428.29" r="3.1"/>
<circle fill="#4e97c4" fill-opacity="0.88" cx="1160.42" cy="454.24" r="3.1"/>
<circle fill="#4e97c4" fill-opacity="0.88" cx="1163.70" cy="457.74" r="3.1"/>
<circle fill="#4e97c4" fill-opacity="0.88" cx="1166.98" cy="466.55" r="3.1"/>
<circle fill="#4e97c4" fill-opacity="0.88" cx="1170.25" cy="466.07" r="3.1"/>
<circle fill="#4e97c4" fill-opacity="0.88" cx="1173.53" cy="418.48" r="3.1"/>
<circle fill="#4e97c4" fill-opacity="0.88" cx="1176.81" cy="286.62" r="3.1"/>
<circle fill="#4e97c4" fill-opacity="0.88" cx="1180.09" cy="347.87" r="3.1"/>
<circle fill="#4e97c4" fill-opacity="0.88" cx="1183.36" cy="467.76" r="3.1"/>
<circle fill="#4e97c4" fill-opacity="0.88" cx="1186.64" cy="227.93" r="3.1"/>
<circle fill="#4e97c4" fill-opacity="0.88" cx="1189.92" cy="264.87" r="3.1"/>
<circle fill="#4e97c4" fill-opacity="0.88" cx="1193.20" cy="331.76" r="3.1"/>
<circle fill="#4e97c4" fill-opacity="0.88" cx="1196.48" cy="277.59" r="3.1"/>
<circle fill="#4e97c4" fill-opacity="0.88" cx="1199.75" cy="258.71" r="3.1"/>
<circle fill="#4e97c4" fill-opacity="0.88" cx="1203.03" cy="314.93" r="3.1"/>
<circle fill="#4e97c4" fill-opacity="0.88" cx="1206.31" cy="371.56" r="3.1"/>
<circle fill="#4e97c4" fill-opacity="0.88" cx="1209.59" cy="332.79" r="3.1"/>
<circle fill="#4e97c4" fill-opacity="0.88" cx="1212.87" cy="466.55" r="3.1"/>
<circle fill="#4e97c4" fill-opacity="0.88" cx="1216.14" cy="462.57" r="3.1"/>
<circle fill="#4e97c4" fill-opacity="0.88" cx="1219.42" cy="236.96" r="3.1"/>
<circle fill="#4e97c4" fill-opacity="0.88" cx="1222.70" cy="462.57" r="3.1"/>
<circle fill="#4e97c4" fill-opacity="0.88" cx="1225.98" cy="416.37" r="3.1"/>
<circle fill="#4e97c4" fill-opacity="0.88" cx="1229.26" cy="270.00" r="3.1"/>
<circle fill="#4e97c4" fill-opacity="0.88" cx="1232.53" cy="283.13" r="3.1"/>
<circle fill="#4e97c4" fill-opacity="0.88" cx="1235.81" cy="295.03" r="3.1"/>
<circle fill="#4e97c4" fill-opacity="0.88" cx="1239.09" cy="329.71" r="3.1"/>
<circle fill="#4e97c4" fill-opacity="0.88" cx="1242.37" cy="392.83" r="3.1"/>
<circle fill="#4e97c4" fill-opacity="0.88" cx="1245.65" cy="273.49" r="3.1"/>
<circle fill="#4e97c4" fill-opacity="0.88" cx="1248.92" cy="325.60" r="3.1"/>
<circle fill="#4e97c4" fill-opacity="0.88" cx="1252.20" cy="466.55" r="3.1"/>
<circle fill="#4e97c4" fill-opacity="0.88" cx="1255.48" cy="442.89" r="3.1"/>
<circle fill="#4e97c4" fill-opacity="0.88" cx="1258.76" cy="253.79" r="3.1"/>
<circle fill="#4e97c4" fill-opacity="0.88" cx="1262.03" cy="390.42" r="3.1"/>
<circle fill="#4e97c4" fill-opacity="0.88" cx="1265.31" cy="409.13" r="3.1"/>
<circle fill="#4e97c4" fill-opacity="0.88" cx="1268.59" cy="439.87" r="3.1"/>
<circle fill="#4e97c4" fill-opacity="0.88" cx="1271.87" cy="298.93" r="3.1"/>
<circle fill="#4e97c4" fill-opacity="0.88" cx="1275.15" cy="244.14" r="3.1"/>
<circle fill="#4e97c4" fill-opacity="0.88" cx="1278.42" cy="440.60" r="3.1"/>
<circle fill="#4e97c4" fill-opacity="0.88" cx="1281.70" cy="400.98" r="3.1"/>
<circle fill="#4e97c4" fill-opacity="0.88" cx="1284.98" cy="353.00" r="3.1"/>
<circle fill="#4e97c4" fill-opacity="0.88" cx="1288.26" cy="465.82" r="3.1"/>
<circle fill="#4e97c4" fill-opacity="0.88" cx="1291.54" cy="325.19" r="3.1"/>
<circle fill="#4e97c4" fill-opacity="0.88" cx="1294.81" cy="467.51" r="3.1"/>
<circle fill="#4e97c4" fill-opacity="0.88" cx="1298.09" cy="227.11" r="3.1"/>
<circle fill="#4e97c4" fill-opacity="0.88" cx="1301.37" cy="468.24" r="3.1"/>
<circle fill="#4e97c4" fill-opacity="0.88" cx="1304.65" cy="231.01" r="3.1"/>
<circle fill="#4e97c4" fill-opacity="0.88" cx="1307.93" cy="291.75" r="3.1"/>
<circle fill="#4e97c4" fill-opacity="0.88" cx="1311.20" cy="241.27" r="3.1"/>
<circle fill="#4e97c4" fill-opacity="0.88" cx="1314.48" cy="207.00" r="3.1"/>
<circle fill="#4e97c4" fill-opacity="0.88" cx="1317.76" cy="240.04" r="3.1"/>
<circle fill="#4e97c4" fill-opacity="0.88" cx="1321.04" cy="462.57" r="3.1"/>
<circle fill="#4e97c4" fill-opacity="0.88" cx="1324.32" cy="467.51" r="3.1"/>
<circle fill="#4e97c4" fill-opacity="0.88" cx="1327.59" cy="274.51" r="3.1"/>
<circle fill="#4e97c4" fill-opacity="0.88" cx="1330.87" cy="462.57" r="3.1"/>
<circle fill="#4e97c4" fill-opacity="0.88" cx="1334.15" cy="321.71" r="3.1"/>
<circle fill="#4e97c4" fill-opacity="0.88" cx="1337.43" cy="462.57" r="3.1"/>
<circle fill="#4e97c4" fill-opacity="0.88" cx="1340.70" cy="306.52" r="3.1"/>
<circle fill="#4e97c4" fill-opacity="0.88" cx="1343.98" cy="466.55" r="3.1"/>
<circle fill="#4e97c4" fill-opacity="0.88" cx="1347.26" cy="215.01" r="3.1"/>
<circle fill="#4e97c4" fill-opacity="0.88" cx="1350.54" cy="212.13" r="3.1"/>
<circle fill="#4e97c4" fill-opacity="0.88" cx="1353.82" cy="462.57" r="3.1"/>
<circle fill="#4e97c4" fill-opacity="0.88" cx="1357.09" cy="221.98" r="3.1"/>
<circle fill="#4e97c4" fill-opacity="0.88" cx="1360.37" cy="466.55" r="3.1"/>
<circle fill="#4e97c4" fill-opacity="0.88" cx="1363.65" cy="270.20" r="3.1"/>
<circle fill="#4e97c4" fill-opacity="0.88" cx="1366.93" cy="212.13" r="3.1"/>
<circle fill="#4e97c4" fill-opacity="0.88" cx="1370.21" cy="465.82" r="3.1"/>
<circle fill="#4e97c4" fill-opacity="0.88" cx="1373.48" cy="201.05" r="3.1"/>
<circle fill="#4e97c4" fill-opacity="0.88" cx="1376.76" cy="228.96" r="3.1"/>
<circle fill="#4e97c4" fill-opacity="0.88" cx="1380.04" cy="212.75" r="3.1"/>
<circle fill="#4e97c4" fill-opacity="0.88" cx="1383.32" cy="200.64" r="3.1"/>
<circle fill="#4e97c4" fill-opacity="0.88" cx="1386.60" cy="203.11" r="3.1"/>
<circle fill="#4e97c4" fill-opacity="0.88" cx="1389.87" cy="466.55" r="3.1"/>
<circle fill="#4e97c4" fill-opacity="0.88" cx="1393.15" cy="462.57" r="3.1"/>
<circle fill="#4e97c4" fill-opacity="0.88" cx="1396.43" cy="225.88" r="3.1"/>
<circle fill="#4e97c4" fill-opacity="0.88" cx="1399.71" cy="199.21" r="3.1"/>
<circle fill="#4e97c4" fill-opacity="0.88" cx="1402.99" cy="249.89" r="3.1"/>
<circle fill="#4e97c4" fill-opacity="0.88" cx="1406.26" cy="206.59" r="3.1"/>
<circle fill="#4e97c4" fill-opacity="0.88" cx="1409.54" cy="217.88" r="3.1"/>
<circle fill="#4e97c4" fill-opacity="0.88" cx="1412.82" cy="204.13" r="3.1"/>
<circle fill="#4e97c4" fill-opacity="0.88" cx="1416.10" cy="194.49" r="3.1"/>
<circle fill="#4e97c4" fill-opacity="0.88" cx="1419.37" cy="203.72" r="3.1"/>
<circle fill="#4e97c4" fill-opacity="0.88" cx="1422.65" cy="200.23" r="3.1"/>
<circle fill="#4e97c4" fill-opacity="0.88" cx="1425.93" cy="240.25" r="3.1"/>
<circle fill="#4e97c4" fill-opacity="0.88" cx="1429.21" cy="211.93" r="3.1"/>
<circle fill="#4e97c4" fill-opacity="0.88" cx="1432.49" cy="465.82" r="3.1"/>
<circle fill="#4e97c4" fill-opacity="0.88" cx="1435.76" cy="466.55" r="3.1"/>
<circle fill="#4e97c4" fill-opacity="0.88" cx="1439.04" cy="192.44" r="3.1"/>
<circle fill="#4e97c4" fill-opacity="0.88" cx="1442.32" cy="467.51" r="3.1"/>
<circle fill="#4e97c4" fill-opacity="0.88" cx="1445.60" cy="192.03" r="3.1"/>
<circle fill="#4e97c4" fill-opacity="0.88" cx="1448.88" cy="462.57" r="3.1"/>
<circle fill="#4e97c4" fill-opacity="0.88" cx="1452.15" cy="462.57" r="3.1"/>
<circle fill="#4e97c4" fill-opacity="0.88" cx="1455.43" cy="192.03" r="3.1"/>
<circle fill="#4e97c4" fill-opacity="0.88" cx="1458.71" cy="466.55" r="3.1"/>
<circle fill="#4e97c4" fill-opacity="0.88" cx="1461.99" cy="465.82" r="3.1"/>
<circle fill="#4e97c4" fill-opacity="0.88" cx="1465.27" cy="468.24" r="3.1"/>
<circle fill="#4e97c4" fill-opacity="0.88" cx="1468.54" cy="462.57" r="3.1"/>
<circle fill="#4e97c4" fill-opacity="0.88" cx="1471.82" cy="201.05" r="3.1"/>
<circle fill="#4e97c4" fill-opacity="0.88" cx="1475.10" cy="465.82" r="3.1"/>
<circle fill="#4e97c4" fill-opacity="0.88" cx="1478.38" cy="188.33" r="3.1"/>
<circle fill="#4e97c4" fill-opacity="0.88" cx="1481.66" cy="462.57" r="3.1"/>
<circle fill="#4e97c4" fill-opacity="0.88" cx="1484.93" cy="199.00" r="3.1"/>
<circle fill="#4e97c4" fill-opacity="0.88" cx="1488.21" cy="191.41" r="3.1"/>
</svg>
<div class="t" style="left:143.90px;top:160.07px;font-size:12.5px;line-height:12.5px;color:#444;transform:scaleX(0.9883);transform-origin:0 0;">Accuracy</div>
<div class="t" style="left:152.90px;top:180.70px;font-size:12px;line-height:12px;color:#444;">1</div>
<div class="t" style="left:144.10px;top:243.10px;font-size:12px;line-height:12px;color:#444;">0.8</div>
<div class="t" style="left:144.10px;top:305.50px;font-size:12px;line-height:12px;color:#444;">0.6</div>
<div class="t" style="left:144.10px;top:367.90px;font-size:12px;line-height:12px;color:#444;">0.4</div>
<div class="t" style="left:144.10px;top:430.30px;font-size:12px;line-height:12px;color:#444;">0.2</div>
<div class="t" style="left:154.10px;top:492.70px;font-size:12px;line-height:12px;color:#444;">0</div>
<div class="t" style="left:167.29px;top:506.60px;font-size:12px;line-height:12px;color:#333;">0</div>
<div class="t" style="left:193.51px;top:506.60px;font-size:12px;line-height:12px;color:#333;">8</div>
<div class="t" style="left:216.44px;top:506.60px;font-size:12px;line-height:12px;color:#333;">16</div>
<div class="t" style="left:242.66px;top:506.60px;font-size:12px;line-height:12px;color:#333;">24</div>
<div class="t" style="left:268.88px;top:506.60px;font-size:12px;line-height:12px;color:#333;">32</div>
<div class="t" style="left:295.11px;top:506.60px;font-size:12px;line-height:12px;color:#333;">40</div>
<div class="t" style="left:321.33px;top:506.60px;font-size:12px;line-height:12px;color:#333;">48</div>
<div class="t" style="left:347.55px;top:506.60px;font-size:12px;line-height:12px;color:#333;">56</div>
<div class="t" style="left:373.78px;top:506.60px;font-size:12px;line-height:12px;color:#333;">64</div>
<div class="t" style="left:400.00px;top:506.60px;font-size:12px;line-height:12px;color:#333;">72</div>
<div class="t" style="left:426.22px;top:506.60px;font-size:12px;line-height:12px;color:#333;">80</div>
<div class="t" style="left:452.45px;top:506.60px;font-size:12px;line-height:12px;color:#333;">88</div>
<div class="t" style="left:478.67px;top:506.60px;font-size:12px;line-height:12px;color:#333;">96</div>
<div class="t" style="left:501.54px;top:506.60px;font-size:12px;line-height:12px;color:#333;">104</div>
<div class="t" style="left:528.22px;top:506.60px;font-size:12px;line-height:12px;color:#333;">112</div>
<div class="t" style="left:553.99px;top:506.60px;font-size:12px;line-height:12px;color:#333;">120</div>
<div class="t" style="left:580.21px;top:506.60px;font-size:12px;line-height:12px;color:#333;">128</div>
<div class="t" style="left:606.44px;top:506.60px;font-size:12px;line-height:12px;color:#333;">136</div>
<div class="t" style="left:632.66px;top:506.60px;font-size:12px;line-height:12px;color:#333;">144</div>
<div class="t" style="left:658.88px;top:506.60px;font-size:12px;line-height:12px;color:#333;">152</div>
<div class="t" style="left:685.11px;top:506.60px;font-size:12px;line-height:12px;color:#333;">160</div>
<div class="t" style="left:717.98px;top:506.60px;font-size:12px;line-height:12px;color:#333;">5</div>
<div class="t" style="left:740.90px;top:506.60px;font-size:12px;line-height:12px;color:#333;">13</div>
<div class="t" style="left:770.43px;top:506.60px;font-size:12px;line-height:12px;color:#333;">0</div>
<div class="t" style="left:796.65px;top:506.60px;font-size:12px;line-height:12px;color:#333;">4</div>
<div class="t" style="left:822.87px;top:506.60px;font-size:12px;line-height:12px;color:#333;">4</div>
<div class="t" style="left:849.10px;top:506.60px;font-size:12px;line-height:12px;color:#333;">2</div>
<div class="t" style="left:875.32px;top:506.60px;font-size:12px;line-height:12px;color:#333;">5</div>
<div class="t" style="left:898.24px;top:506.60px;font-size:12px;line-height:12px;color:#333;">13</div>
<div class="t" style="left:927.77px;top:506.60px;font-size:12px;line-height:12px;color:#333;">1</div>
<div class="t" style="left:953.99px;top:506.60px;font-size:12px;line-height:12px;color:#333;">0</div>
<div class="t" style="left:980.21px;top:506.60px;font-size:12px;line-height:12px;color:#333;">8</div>
<div class="t" style="left:1003.14px;top:506.60px;font-size:12px;line-height:12px;color:#333;">16</div>
<div class="t" style="left:1029.36px;top:506.60px;font-size:12px;line-height:12px;color:#333;">24</div>
<div class="t" style="left:1055.58px;top:506.60px;font-size:12px;line-height:12px;color:#333;">32</div>
<div class="t" style="left:1081.81px;top:506.60px;font-size:12px;line-height:12px;color:#333;">40</div>
<div class="t" style="left:1108.03px;top:506.60px;font-size:12px;line-height:12px;color:#333;">48</div>
<div class="t" style="left:1134.25px;top:506.60px;font-size:12px;line-height:12px;color:#333;">56</div>
<div class="t" style="left:1160.48px;top:506.60px;font-size:12px;line-height:12px;color:#333;">64</div>
<div class="t" style="left:1186.70px;top:506.60px;font-size:12px;line-height:12px;color:#333;">72</div>
<div class="t" style="left:1212.92px;top:506.60px;font-size:12px;line-height:12px;color:#333;">80</div>
<div class="t" style="left:1239.15px;top:506.60px;font-size:12px;line-height:12px;color:#333;">88</div>
<div class="t" style="left:1265.37px;top:506.60px;font-size:12px;line-height:12px;color:#333;">96</div>
<div class="t" style="left:1288.24px;top:506.60px;font-size:12px;line-height:12px;color:#333;">104</div>
<div class="t" style="left:1314.92px;top:506.60px;font-size:12px;line-height:12px;color:#333;">112</div>
<div class="t" style="left:1340.69px;top:506.60px;font-size:12px;line-height:12px;color:#333;">120</div>
<div class="t" style="left:1366.91px;top:506.60px;font-size:12px;line-height:12px;color:#333;">128</div>
<div class="t" style="left:1393.14px;top:506.60px;font-size:12px;line-height:12px;color:#333;">136</div>
<div class="t" style="left:1419.36px;top:506.60px;font-size:12px;line-height:12px;color:#333;">144</div>
<div class="t" style="left:1445.58px;top:506.60px;font-size:12px;line-height:12px;color:#333;">152</div>
<div class="t" style="left:1471.81px;top:506.60px;font-size:12px;line-height:12px;color:#333;">160</div>
<div class="t" style="left:1506.00px;top:493.35px;font-size:12.3px;line-height:12.3px;color:#444;transform:scaleX(0.9787);transform-origin:0 0;">Trial</div>
<div class="r" style="left:4px;top:566px;width:1652px;height:38px;background:#b3b3b3;"></div>
<div class="r" style="left:18px;top:574.0px;width:3px;height:2.6px;background:#4a4a4a;"></div>
<div class="r" style="left:25.4px;top:574.0px;width:24.5px;height:2.6px;background:#4a4a4a;"></div>
<div class="r" style="left:18px;top:580.4px;width:3px;height:2.6px;background:#4a4a4a;"></div>
<div class="r" style="left:25.4px;top:580.4px;width:24.5px;height:2.6px;background:#4a4a4a;"></div>
<div class="r" style="left:18px;top:586.8px;width:3px;height:2.6px;background:#4a4a4a;"></div>
<div class="r" style="left:25.4px;top:586.8px;width:24.5px;height:2.6px;background:#4a4a4a;"></div>
<div class="r" style="left:18px;top:593.2px;width:3px;height:2.6px;background:#4a4a4a;"></div>
<div class="r" style="left:25.4px;top:593.2px;width:24.5px;height:2.6px;background:#4a4a4a;"></div>
<div class="t" style="left:64.30px;top:576.70px;font-size:18px;line-height:18px;color:#333;transform:scaleX(0.9515);transform-origin:0 0;-webkit-text-stroke:0.25px #333;">All Trials</div>
<div class="r" style="left:24px;top:644px;width:1611px;height:1px;background:#d9d9d9;"></div>
<div class="t" style="left:183.10px;top:624.85px;font-size:14.3px;line-height:14.3px;color:#7a7a7a;transform:scaleX(0.9159);transform-origin:0 0;">Trial No.</div>
<svg class="r" style="left:289px;top:624px" width="10" height="17" viewBox="0 0 10 17"><path fill="#bfbfbf" d="M1,6.7 L5,2.5 L9,6.7 Z M1,10.1 L9,10.1 L5,14.8 Z"/></svg>
<div class="t" style="left:310.00px;top:624.85px;font-size:14.3px;line-height:14.3px;color:#7a7a7a;transform:scaleX(0.9000);transform-origin:0 0;">Id</div>
<svg class="r" style="left:389px;top:624px" width="10" height="17" viewBox="0 0 10 17"><path fill="#bfbfbf" d="M1,6.7 L5,2.5 L9,6.7 Z M1,10.1 L9,10.1 L5,14.8 Z"/></svg>
<div class="t" style="left:498.00px;top:624.85px;font-size:14.3px;line-height:14.3px;color:#7a7a7a;transform:scaleX(0.9797);transform-origin:0 0;">Duration</div>
<svg class="r" style="left:623px;top:624px" width="10" height="17" viewBox="0 0 10 17"><path fill="#bfbfbf" d="M1,6.7 L5,2.5 L9,6.7 Z M1,10.1 L9,10.1 L5,14.8 Z"/></svg>
<div class="t" style="left:748.60px;top:624.85px;font-size:14.3px;line-height:14.3px;color:#7a7a7a;transform:scaleX(0.9086);transform-origin:0 0;">Status</div>
<svg class="r" style="left:846px;top:624px" width="10" height="17" viewBox="0 0 10 17"><path fill="#bfbfbf" d="M1,6.7 L5,2.5 L9,6.7 Z M1,10.1 L9,10.1 L5,14.8 Z"/></svg>
<svg class="r" style="left:870px;top:625px" width="16" height="16" viewBox="870 625 16 16"><path fill="#bfbfbf" d="M872.7,628.1 L883.1,628.1 L880.1,633.6 L875.9,633.6 Z M876,635.1 H880 V637.8 H876 Z"/></svg>
<div class="t" style="left:1017.00px;top:624.85px;font-size:14.3px;line-height:14.3px;color:#7a7a7a;transform:scaleX(0.9751);transform-origin:0 0;">Default Metric</div>
<svg class="r" style="left:1209px;top:624px" width="10" height="17" viewBox="0 0 10 17"><path fill="#bfbfbf" d="M1,6.7 L5,2.5 L9,6.7 Z M1,10.1 L9,10.1 L5,14.8 Z"/></svg>
<div class="t" style="left:1273.80px;top:624.85px;font-size:14.3px;line-height:14.3px;color:#7a7a7a;transform:scaleX(0.9300);transform-origin:0 0;">Operation</div>
<div class="t" style="left:1487.05px;top:624.85px;font-size:14.3px;line-height:14.3px;color:#7a7a7a;transform:scaleX(0.9300);transform-origin:0 0;">Tensor</div>
<div class="r" style="left:24px;top:645px;width:83px;height:28px;background:#cccccc;"></div>
<div class="r" style="left:24px;top:673px;width:1611px;height:1px;background:#e8e8e8;"></div>
<div class="t" style="left:62.20px;top:653.45px;font-size:13px;line-height:13px;color:#222;">+</div>
<div class="t" style="left:204.00px;top:651.85px;font-size:14.3px;line-height:14.3px;color:#333;transform:scaleX(0.9000);transform-origin:0 0;">0</div>
<div class="t" style="left:307.80px;top:651.85px;font-size:14.3px;line-height:14.3px;color:#333;transform:scaleX(0.8800);transform-origin:0 0;">ZBIOB</div>
<div class="t" style="left:590.70px;top:651.85px;font-size:14.3px;line-height:14.3px;color:#333;transform:scaleX(0.7922);transform-origin:0 0;">10s</div>
<div class="t" style="left:729.65px;top:651.85px;font-size:14.3px;line-height:14.3px;color:#1a9a55;transform:scaleX(0.8318);transform-origin:0 0;">SUCCEEDED</div>
<div class="t" style="left:1032.25px;top:651.85px;font-size:14.3px;line-height:14.3px;color:#333;transform:scaleX(0.9312);transform-origin:0 0;">0.096000</div>
<div class="r" style="left:1278px;top:647px;width:48px;height:24px;background:#f5f5f5;border:1px solid #d9d9d9;border-radius:3px"></div>
<div class="t" style="left:1295.00px;top:653.67px;font-size:14.5px;line-height:14.5px;color:#b8b8b8;transform:scaleX(0.8290);transform-origin:0 0;">Kill</div>
<div class="r" style="left:1452px;top:647px;width:109px;height:26px;background:#3c8dbc;border-radius:3px"></div>
<div class="t" style="left:1467.50px;top:653.67px;font-size:14.5px;line-height:14.5px;color:#fff;transform:scaleX(0.9489);transform-origin:0 0;">TensorBoard</div>
<div class="r" style="left:24px;top:674px;width:83px;height:28px;background:#cccccc;"></div>
<div class="r" style="left:24px;top:702px;width:1611px;height:1px;background:#e8e8e8;"></div>
<div class="t" style="left:62.20px;top:682.45px;font-size:13px;line-height:13px;color:#222;">+</div>
<div class="t" style="left:204.00px;top:680.85px;font-size:14.3px;line-height:14.3px;color:#333;transform:scaleX(0.9000);transform-origin:0 0;">1</div>
<div class="t" style="left:307.80px;top:680.85px;font-size:14.3px;line-height:14.3px;color:#333;transform:scaleX(0.8800);transform-origin:0 0;">r6xJw</div>
<div class="t" style="left:589.00px;top:680.85px;font-size:14.3px;line-height:14.3px;color:#333;transform:scaleX(0.8658);transform-origin:0 0;">20s</div>
<div class="t" style="left:729.65px;top:680.85px;font-size:14.3px;line-height:14.3px;color:#1a9a55;transform:scaleX(0.8318);transform-origin:0 0;">SUCCEEDED</div>
<div class="t" style="left:1032.25px;top:680.85px;font-size:14.3px;line-height:14.3px;color:#333;transform:scaleX(0.9312);transform-origin:0 0;">0.582200</div>
<div class="r" style="left:1278px;top:676px;width:48px;height:24px;background:#f5f5f5;border:1px solid #d9d9d9;border-radius:3px"></div>
<div class="t" style="left:1295.00px;top:682.67px;font-size:14.5px;line-height:14.5px;color:#b8b8b8;transform:scaleX(0.8290);transform-origin:0 0;">Kill</div>
<div class="r" style="left:1452px;top:676px;width:109px;height:26px;background:#3c8dbc;border-radius:3px"></div>
<div class="t" style="left:1467.50px;top:682.67px;font-size:14.5px;line-height:14.5px;color:#fff;transform:scaleX(0.9489);transform-origin:0 0;">TensorBoard</div>
<div class="r" style="left:24px;top:703px;width:83px;height:28px;background:#cccccc;"></div>
<div class="r" style="left:24px;top:731px;width:1611px;height:1px;background:#e8e8e8;"></div>
<div class="t" style="left:62.20px;top:711.45px;font-size:13px;line-height:13px;color:#222;">+</div>
<div class="t" style="left:204.00px;top:709.85px;font-size:14.3px;line-height:14.3px;color:#333;transform:scaleX(0.9000);transform-origin:0 0;">2</div>
<div class="t" style="left:307.80px;top:709.85px;font-size:14.3px;line-height:14.3px;color:#333;transform:scaleX(0.8800);transform-origin:0 0;">iNRqM</div>
<div class="t" style="left:590.70px;top:709.85px;font-size:14.3px;line-height:14.3px;color:#333;transform:scaleX(0.7922);transform-origin:0 0;">10s</div>
<div class="t" style="left:729.65px;top:709.85px;font-size:14.3px;line-height:14.3px;color:#1a9a55;transform:scaleX(0.8318);transform-origin:0 0;">SUCCEEDED</div>
<div class="t" style="left:1032.25px;top:709.85px;font-size:14.3px;line-height:14.3px;color:#333;transform:scaleX(0.9312);transform-origin:0 0;">0.095800</div>
<div class="r" style="left:1278px;top:705px;width:48px;height:24px;background:#f5f5f5;border:1px solid #d9d9d9;border-radius:3px"></div>
<div class="t" style="left:1295.00px;top:711.67px;font-size:14.5px;line-height:14.5px;color:#b8b8b8;transform:scaleX(0.8290);transform-origin:0 0;">Kill</div>
<div class="r" style="left:1452px;top:705px;width:109px;height:26px;background:#3c8dbc;border-radius:3px"></div>
<div class="t" style="left:1467.50px;top:711.67px;font-size:14.5px;line-height:14.5px;color:#fff;transform:scaleX(0.9489);transform-origin:0 0;">TensorBoard</div>
<div class="r" style="left:24px;top:732px;width:83px;height:28px;background:#cccccc;"></div>
<div class="r" style="left:24px;top:760px;width:1611px;height:1px;background:#e8e8e8;"></div>
<div class="t" style="left:62.20px;top:740.45px;font-size:13px;line-height:13px;color:#222;">+</div>
<div class="t" style="left:204.00px;top:738.85px;font-size:14.3px;line-height:14.3px;color:#333;transform:scaleX(0.9000);transform-origin:0 0;">3</div>
<div class="t" style="left:307.80px;top:738.85px;font-size:14.3px;line-height:14.3px;color:#333;transform:scaleX(0.8800);transform-origin:0 0;">ksFwV</div>
<div class="t" style="left:590.70px;top:738.85px;font-size:14.3px;line-height:14.3px;color:#333;transform:scaleX(0.7922);transform-origin:0 0;">15s</div>
<div class="t" style="left:729.65px;top:738.85px;font-size:14.3px;line-height:14.3px;color:#1a9a55;transform:scaleX(0.8318);transform-origin:0 0;">SUCCEEDED</div>
<div class="t" style="left:1032.25px;top:738.85px;font-size:14.3px;line-height:14.3px;color:#333;transform:scaleX(0.9312);transform-origin:0 0;">0.252400</div>
<div class="r" style="left:1278px;top:734px;width:48px;height:24px;background:#f5f5f5;border:1px solid #d9d9d9;border-radius:3px"></div>
<div class="t" style="left:1295.00px;top:740.67px;font-size:14.5px;line-height:14.5px;color:#b8b8b8;transform:scaleX(0.8290);transform-origin:0 0;">Kill</div>
<div class="r" style="left:1452px;top:734px;width:109px;height:26px;background:#3c8dbc;border-radius:3px"></div>
<div class="t" style="left:1467.50px;top:740.67px;font-size:14.5px;line-height:14.5px;color:#fff;transform:scaleX(0.9489);transform-origin:0 0;">TensorBoard</div>
<div class="r" style="left:24px;top:761px;width:83px;height:28px;background:#cccccc;"></div>
<div class="r" style="left:24px;top:789px;width:1611px;height:1px;background:#e8e8e8;"></div>
<div class="t" style="left:62.20px;top:769.45px;font-size:13px;line-height:13px;color:#222;">+</div>
<div class="t" style="left:204.00px;top:767.85px;font-size:14.3px;line-height:14.3px;color:#333;transform:scaleX(0.9000);transform-origin:0 0;">4</div>
<div class="t" style="left:307.80px;top:767.85px;font-size:14.3px;line-height:14.3px;color:#333;transform:scaleX(0.8800);transform-origin:0 0;">O4Tpl</div>
<div class="t" style="left:590.70px;top:767.85px;font-size:14.3px;line-height:14.3px;color:#333;transform:scaleX(0.7922);transform-origin:0 0;">15s</div>
<div class="t" style="left:729.65px;top:767.85px;font-size:14.3px;line-height:14.3px;color:#1a9a55;transform:scaleX(0.8318);transform-origin:0 0;">SUCCEEDED</div>
<div class="t" style="left:1032.25px;top:767.85px;font-size:14.3px;line-height:14.3px;color:#333;transform:scaleX(0.9312);transform-origin:0 0;">0.477800</div>
<div class="r" style="left:1278px;top:763px;width:48px;height:24px;background:#f5f5f5;border:1px solid #d9d9d9;border-radius:3px"></div>
<div class="t" style="left:1295.00px;top:769.67px;font-size:14.5px;line-height:14.5px;color:#b8b8b8;transform:scaleX(0.8290);transform-origin:0 0;">Kill</div>
<div class="r" style="left:1452px;top:763px;width:109px;height:26px;background:#3c8dbc;border-radius:3px"></div>
<div class="t" style="left:1467.50px;top:769.67px;font-size:14.5px;line-height:14.5px;color:#fff;transform:scaleX(0.9489);transform-origin:0 0;">TensorBoard</div>
<div class="r" style="left:24px;top:790px;width:83px;height:28px;background:#cccccc;"></div>
<div class="r" style="left:24px;top:818px;width:1611px;height:1px;background:#e8e8e8;"></div>
<div class="t" style="left:62.20px;top:798.45px;font-size:13px;line-height:13px;color:#222;">+</div>
<div class="t" style="left:204.00px;top:796.85px;font-size:14.3px;line-height:14.3px;color:#333;transform:scaleX(0.9000);transform-origin:0 0;">5</div>
<div class="t" style="left:307.80px;top:796.85px;font-size:14.3px;line-height:14.3px;color:#333;transform:scaleX(0.8800);transform-origin:0 0;">iMdi2</div>
<div class="t" style="left:589.00px;top:796.85px;font-size:14.3px;line-height:14.3px;color:#333;transform:scaleX(0.8658);transform-origin:0 0;">20s</div>
<div class="t" style="left:729.65px;top:796.85px;font-size:14.3px;line-height:14.3px;color:#1a9a55;transform:scaleX(0.8318);transform-origin:0 0;">SUCCEEDED</div>
<div class="t" style="left:1032.25px;top:796.85px;font-size:14.3px;line-height:14.3px;color:#333;transform:scaleX(0.9312);transform-origin:0 0;">0.095800</div>
<div class="r" style="left:1278px;top:792px;width:48px;height:24px;background:#f5f5f5;border:1px solid #d9d9d9;border-radius:3px"></div>
<div class="t" style="left:1295.00px;top:798.67px;font-size:14.5px;line-height:14.5px;color:#b8b8b8;transform:scaleX(0.8290);transform-origin:0 0;">Kill</div>
<div class="r" style="left:1452px;top:792px;width:109px;height:26px;background:#3c8dbc;border-radius:3px"></div>
<div class="t" style="left:1467.50px;top:798.67px;font-size:14.5px;line-height:14.5px;color:#fff;transform:scaleX(0.9489);transform-origin:0 0;">TensorBoard</div>
<div class="r" style="left:24px;top:819px;width:83px;height:28px;background:#cccccc;"></div>
<div class="r" style="left:24px;top:847px;width:1611px;height:1px;background:#e8e8e8;"></div>
<div class="t" style="left:62.20px;top:827.45px;font-size:13px;line-height:13px;color:#222;">+</div>
<div class="t" style="left:204.00px;top:825.85px;font-size:14.3px;line-height:14.3px;color:#333;transform:scaleX(0.9000);transform-origin:0 0;">6</div>
<div class="t" style="left:307.80px;top:825.85px;font-size:14.3px;line-height:14.3px;color:#333;transform:scaleX(0.8800);transform-origin:0 0;">cTYJI</div>
<div class="t" style="left:590.70px;top:825.85px;font-size:14.3px;line-height:14.3px;color:#333;transform:scaleX(0.7922);transform-origin:0 0;">15s</div>
<div class="t" style="left:729.65px;top:825.85px;font-size:14.3px;line-height:14.3px;color:#1a9a55;transform:scaleX(0.8318);transform-origin:0 0;">SUCCEEDED</div>
<div class="t" style="left:1032.25px;top:825.85px;font-size:14.3px;line-height:14.3px;color:#333;transform:scaleX(0.9471);transform-origin:0 0;">0.113500</div>
<div class="r" style="left:1278px;top:821px;width:48px;height:24px;background:#f5f5f5;border:1px solid #d9d9d9;border-radius:3px"></div>
<div class="t" style="left:1295.00px;top:827.67px;font-size:14.5px;line-height:14.5px;color:#b8b8b8;transform:scaleX(0.8290);transform-origin:0 0;">Kill</div>
<div class="r" style="left:1452px;top:821px;width:109px;height:26px;background:#3c8dbc;border-radius:3px"></div>
<div class="t" style="left:1467.50px;top:827.67px;font-size:14.5px;line-height:14.5px;color:#fff;transform:scaleX(0.9489);transform-origin:0 0;">TensorBoard</div>
<div class="r" style="left:24px;top:848px;width:83px;height:28px;background:#cccccc;"></div>
<div class="r" style="left:24px;top:876px;width:1611px;height:1px;background:#e8e8e8;"></div>
<div class="t" style="left:62.20px;top:856.45px;font-size:13px;line-height:13px;color:#222;">+</div>
<div class="t" style="left:204.00px;top:854.85px;font-size:14.3px;line-height:14.3px;color:#333;transform:scaleX(0.9000);transform-origin:0 0;">7</div>
<div class="t" style="left:307.80px;top:854.85px;font-size:14.3px;line-height:14.3px;color:#333;transform:scaleX(0.8800);transform-origin:0 0;">KGsUR</div>
<div class="t" style="left:589.00px;top:854.85px;font-size:14.3px;line-height:14.3px;color:#333;transform:scaleX(0.8658);transform-origin:0 0;">20s</div>
<div class="t" style="left:729.65px;top:854.85px;font-size:14.3px;line-height:14.3px;color:#1a9a55;transform:scaleX(0.8318);transform-origin:0 0;">SUCCEEDED</div>
<div class="t" style="left:1032.25px;top:854.85px;font-size:14.3px;line-height:14.3px;color:#333;transform:scaleX(0.9312);transform-origin:0 0;">0.101000</div>
<div class="r" style="left:1278px;top:850px;width:48px;height:24px;background:#f5f5f5;border:1px solid #d9d9d9;border-radius:3px"></div>
<div class="t" style="left:1295.00px;top:856.67px;font-size:14.5px;line-height:14.5px;color:#b8b8b8;transform:scaleX(0.8290);transform-origin:0 0;">Kill</div>
<div class="r" style="left:1452px;top:850px;width:109px;height:26px;background:#3c8dbc;border-radius:3px"></div>
<div class="t" style="left:1467.50px;top:856.67px;font-size:14.5px;line-height:14.5px;color:#fff;transform:scaleX(0.9489);transform-origin:0 0;">TensorBoard</div>
<div class="r" style="left:24px;top:877px;width:83px;height:28px;background:#cccccc;"></div>
<div class="r" style="left:24px;top:905px;width:1611px;height:1px;background:#e8e8e8;"></div>
<div class="t" style="left:62.20px;top:885.45px;font-size:13px;line-height:13px;color:#222;">+</div>
<div class="t" style="left:204.00px;top:883.85px;font-size:14.3px;line-height:14.3px;color:#333;transform:scaleX(0.9000);transform-origin:0 0;">8</div>
<div class="t" style="left:307.80px;top:883.85px;font-size:14.3px;line-height:14.3px;color:#333;transform:scaleX(0.8800);transform-origin:0 0;">Q3xTS</div>
<div class="t" style="left:590.70px;top:883.85px;font-size:14.3px;line-height:14.3px;color:#333;transform:scaleX(0.7922);transform-origin:0 0;">15s</div>
<div class="t" style="left:729.65px;top:883.85px;font-size:14.3px;line-height:14.3px;color:#1a9a55;transform:scaleX(0.8318);transform-origin:0 0;">SUCCEEDED</div>
<div class="t" style="left:1032.25px;top:883.85px;font-size:14.3px;line-height:14.3px;color:#333;transform:scaleX(0.9312);transform-origin:0 0;">0.089200</div>
<div class="r" style="left:1278px;top:879px;width:48px;height:24px;background:#f5f5f5;border:1px solid #d9d9d9;border-radius:3px"></div>
<div class="t" style="left:1295.00px;top:885.67px;font-size:14.5px;line-height:14.5px;color:#b8b8b8;transform:scaleX(0.8290);transform-origin:0 0;">Kill</div>
<div class="r" style="left:1452px;top:879px;width:109px;height:26px;background:#3c8dbc;border-radius:3px"></div>
<div class="t" style="left:1467.50px;top:885.67px;font-size:14.5px;line-height:14.5px;color:#fff;transform:scaleX(0.9489);transform-origin:0 0;">TensorBoard</div>
<div class="r" style="left:24px;top:906px;width:83px;height:28px;background:#cccccc;"></div>
<div class="r" style="left:24px;top:934px;width:1611px;height:1px;background:#e8e8e8;"></div>
<div class="t" style="left:62.20px;top:914.45px;font-size:13px;line-height:13px;color:#222;">+</div>
<div class="t" style="left:204.00px;top:912.85px;font-size:14.3px;line-height:14.3px;color:#333;transform:scaleX(0.9000);transform-origin:0 0;">9</div>
<div class="t" style="left:307.80px;top:912.85px;font-size:14.3px;line-height:14.3px;color:#333;transform:scaleX(0.8800);transform-origin:0 0;">I2x6R</div>
<div class="t" style="left:590.70px;top:912.85px;font-size:14.3px;line-height:14.3px;color:#333;transform:scaleX(0.7922);transform-origin:0 0;">15s</div>
<div class="t" style="left:729.65px;top:912.85px;font-size:14.3px;line-height:14.3px;color:#1a9a55;transform:scaleX(0.8318);transform-origin:0 0;">SUCCEEDED</div>
<div class="t" style="left:1032.25px;top:912.85px;font-size:14.3px;line-height:14.3px;color:#333;transform:scaleX(0.9312);transform-origin:0 0;">0.393400</div>
<div class="r" style="left:1278px;top:908px;width:48px;height:24px;background:#f5f5f5;border:1px solid #d9d9d9;border-radius:3px"></div>
<div class="t" style="left:1295.00px;top:914.67px;font-size:14.5px;line-height:14.5px;color:#b8b8b8;transform:scaleX(0.8290);transform-origin:0 0;">Kill</div>
<div class="r" style="left:1452px;top:908px;width:109px;height:26px;background:#3c8dbc;border-radius:3px"></div>
<div class="t" style="left:1467.50px;top:914.67px;font-size:14.5px;line-height:14.5px;color:#fff;transform:scaleX(0.9489);transform-origin:0 0;">TensorBoard</div>
<div class="r" style="left:1254px;top:951px;width:30px;height:30px;border:1px solid #d9d9d9;border-radius:4px;background:#fff"></div>
<div class="r" style="left:1294px;top:951px;width:30px;height:30px;border:1px solid #1890ff;border-radius:4px;background:#fff"></div>
<div class="r" style="left:1334px;top:951px;width:30px;height:30px;border:1px solid #d9d9d9;border-radius:4px;background:#fff"></div>
<div class="r" style="left:1374px;top:951px;width:30px;height:30px;border:1px solid #d9d9d9;border-radius:4px;background:#fff"></div>
<div class="r" style="left:1414px;top:951px;width:30px;height:30px;border:1px solid #d9d9d9;border-radius:4px;background:#fff"></div>
<div class="r" style="left:1454px;top:951px;width:30px;height:30px;border:1px solid #d9d9d9;border-radius:4px;background:#fff"></div>
<div class="r" style="left:1534px;top:951px;width:30px;height:30px;border:1px solid #d9d9d9;border-radius:4px;background:#fff"></div>
<div class="r" style="left:1574px;top:951px;width:30px;height:30px;border:1px solid #d9d9d9;border-radius:4px;background:#fff"></div>
<svg class="r" style="left:1254px;top:951px" width="400" height="33" viewBox="1254 951 400 33"><g fill="none" stroke="#bbb" stroke-width="1.2"><path d="M1272.5,962.5 L1268,967.5 L1272.5,972.5"/></g><g fill="none" stroke="#555" stroke-width="1.2"><path d="M1587.5,962.5 L1592,967.5 L1587.5,972.5"/></g><g fill="#bbb"><circle cx="1503.5" cy="967.5" r="1.2"/><circle cx="1509" cy="967.5" r="1.2"/><circle cx="1514.5" cy="967.5" r="1.2"/></g></svg>
<div class="t" style="left:1306.10px;top:959.70px;font-size:14px;line-height:14px;color:#1890ff;">1</div>
<div class="t" style="left:1346.10px;top:959.70px;font-size:14px;line-height:14px;color:#555;">2</div>
<div class="t" style="left:1386.10px;top:959.70px;font-size:14px;line-height:14px;color:#555;">3</div>
<div class="t" style="left:1426.10px;top:959.70px;font-size:14px;line-height:14px;color:#555;">4</div>
<div class="t" style="left:1466.10px;top:959.70px;font-size:14px;line-height:14px;color:#555;">5</div>
<div class="t" style="left:1542.20px;top:959.70px;font-size:14px;line-height:14px;color:#555;">42</div>
</body></html>
